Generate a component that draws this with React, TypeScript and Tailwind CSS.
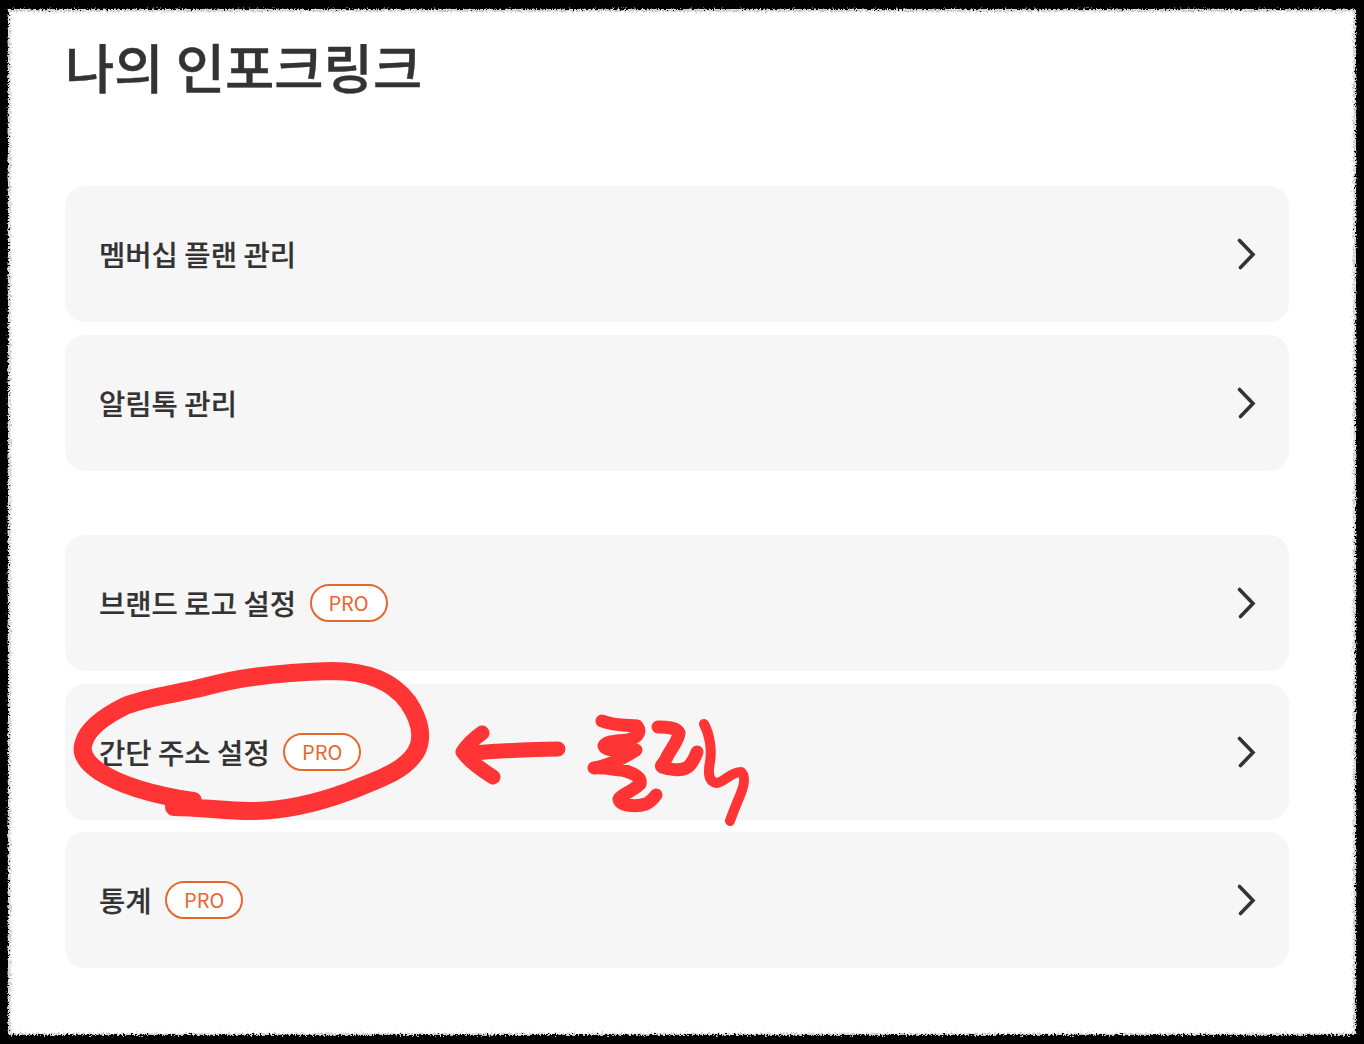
const FONT = "font-['Noto_Sans_CJK_KR','Noto_Sans',sans-serif]";

function Chevron() {
  return (
    <svg width="24" height="36" viewBox="0 0 24 36" fill="none" className="shrink-0">
      <path d="M4.5 4.5 L18 18.5 L5.5 31.5" stroke="#333333" strokeWidth="3.6" strokeLinecap="round" strokeLinejoin="miter" />
    </svg>
  );
}

function Row({ label, pro }: { label: string; pro?: boolean }) {
  return (
    <div className="flex h-[136px] items-center justify-between rounded-[20px] bg-[#f6f6f6] pl-[34px] pr-[30px]">
      <div className="flex items-center gap-[13.5px]">
        <span className="text-[28.6px] leading-[38px] font-medium text-[#333333] [-webkit-text-stroke:0.2px_#333333]">{label}</span>
        {pro && (
          <span className="flex h-[38px] w-[78px] items-center justify-center rounded-full border-2 border-[#e7672e] bg-white text-[20px] leading-none text-[#e7672e]">
            PRO
          </span>
        )}
      </div>
      <Chevron />
    </div>
  );
}

export default function App() {
  return (
    <div className={`relative h-[1044px] w-[1364px] overflow-hidden bg-black pb-[8px] pl-[8px] pr-[8px] pt-[9px] ${FONT}`}>
      <div className="h-full w-full bg-white pl-[57px] pr-[67px]">
        <h1 className="pt-[21px] pb-[1px] text-[53.6px] leading-[72px] font-medium text-[#333333] [-webkit-text-stroke:0.4px_#333333]">나의 인포크링크</h1>
        <div className="mt-[83px] flex flex-col gap-[13px]">
          <Row label="멤버십 플랜 관리" />
          <Row label="알림톡 관리" />
        </div>
        <div className="mt-[64px] flex flex-col gap-[12.5px]">
          <Row label="브랜드 로고 설정" pro />
          <Row label="간단 주소 설정" pro />
          <Row label="통계" pro />
        </div>
      </div>

      {/* torn frame edge + hand-drawn annotation */}
      <svg className="pointer-events-none absolute left-0 top-0" width="1364" height="1044" viewBox="0 0 1364 1044" fill="none">
        <defs>
          <filter id="rough" x="-2%" y="-2%" width="104%" height="104%">
            <feTurbulence type="fractalNoise" baseFrequency="0.55" numOctaves="2" seed="4" result="n" />
            <feDisplacementMap in="SourceGraphic" in2="n" scale="7" />
            <feGaussianBlur stdDeviation="0.6" />
          </filter>
        </defs>
        <rect x="9.5" y="10.5" width="1345" height="1024" stroke="#c4c4c4" strokeWidth="2" filter="url(#rough)" />
        <rect x="6.5" y="7.5" width="1351" height="1029" stroke="#000000" strokeWidth="3" filter="url(#rough)" />
        <g stroke="#ff3535" strokeLinecap="round" strokeLinejoin="round">
          <path
            d="M174 807 C180 803 186 803 193 801 C160 796 125 788 100 772 C85 762 80 752 84 742 C88 728 105 716 125 706 C150 696 178 694 208 686 C245 676 290 672 332 671 C367 671 393 682 408 702 C420 720 424 738 416 752 C404 772 377 780 347 792 C317 803 285 811 250 811 C225 811 200 807 174 807"
            strokeWidth="18"
          />
          <path d="M558 749 C530 749 500 751 473 753 M482 733 C475 738 468 744 463 752 C470 762 482 770 493 777" strokeWidth="15" />
          <path
            d="M602 721 C615 726 628 725 637 726 C642 733 636 738 628 740 C618 741 606 741 604 746 C606 752 620 749 636 750 C625 757 608 766 594 768 C605 767 615 770 622 770 C630 772 642 776 640 784 C632 792 622 794 619 799 C620 806 636 807 646 804 C650 802 654 798 656 795"
            strokeWidth="13"
          />
          <path d="M658 727 C668 727 677 728 679 733 C678 742 670 750 667 757 C664 764 660 765 662 767 C672 771 685 771 690 765 C694 760 696 755 697 752" strokeWidth="13" />
          <path d="M704 724 C710 735 712 750 710 762 C708 772 708 781 716 783 C724 783 730 772 741 772 C746 776 744 785 741 793 C737 803 733 812 730 821" strokeWidth="10" />
        </g>
      </svg>
    </div>
  );
}
